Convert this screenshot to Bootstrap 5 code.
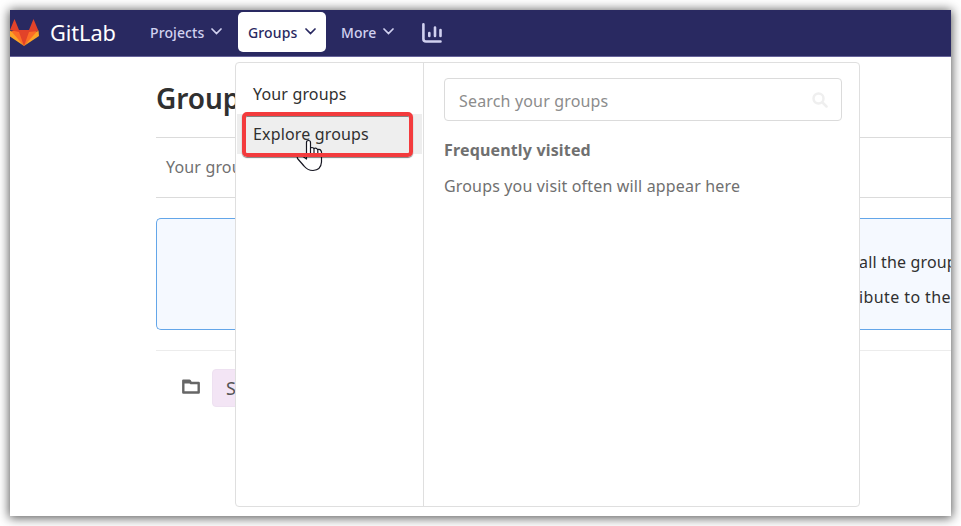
<!DOCTYPE html>
<html lang="en">
<head>
<meta charset="utf-8">
<meta name="viewport" content="width=device-width, initial-scale=1">
<title>Groups · GitLab</title>
<link href="https://cdn.jsdelivr.net/npm/bootstrap@5.3.0/dist/css/bootstrap.min.css" rel="stylesheet">
<style>
body{font-family:"Noto Sans","Open Sans",sans-serif;font-size:16px;line-height:24px;letter-spacing:.16px;color:#303030;padding:10px;height:526px;overflow:hidden;background:#fff}
.window{height:506px;background:#fff;box-shadow:0 1px 10px 1px rgba(0,0,0,.65)}
.topbar{height:47px;background:#292961;border-bottom:1px solid #66639a;color:#d1d1f0}
.logo{width:29px;height:29px;margin-top:-2px}
.brand{font-size:21.800px;color:#fff;margin-left:11px;width:100px;letter-spacing:-.1px;margin-top:-1px}
.top-link{font-size:14px;font-weight:500;height:40px;width:88px;border-radius:5px;margin-top:-3px;color:#d1d1f0;letter-spacing:.1px}
.top-link span{padding-top:2px}
.top-link svg{margin-left:7px}
.top-link.current{background:#fff;color:#292961;padding-left:10px;letter-spacing:.15px}
.top-link.more-link{width:96px;padding-left:15px}
.content-area{padding-left:146px}
.page-title{font-size:28px;font-weight:600;line-height:36px;height:80px;padding-top:23px;letter-spacing:-.1px}
.tab-row{height:61px;border-top:1px solid #dbdbdb;border-bottom:1px solid #dbdbdb;color:#707070;padding:17px 10px}
.notice{height:112px;margin-top:20px;background:#f5f9ff;border:1px solid #63a6e9;border-right:0;border-radius:5px 0 0 5px;padding:26px 0 0 702px;line-height:35px}
.notice .cut{margin-left:-7px;letter-spacing:.4px}
.group-row{margin-top:20px;border-top:1px solid #ececec;padding:18px 0 0 26px}
.group-row svg{margin-top:-2px}
.avatar{width:38px;height:38px;border-radius:4px;background:#f3e5f5;border:1px solid #eee1f1;font-size:18px;color:#555;margin-left:12px}
.groups-menu{left:225px;top:52px;width:625px;height:445px;background:#fff;border:1px solid #dfdfdf;border-radius:4px;z-index:5}
.menu-side{width:188px;border-right:1px solid #dfdfdf;padding:11px 1px}
.menu-item{height:40px;padding:0 16px;color:#303030}
.menu-item.hovered{background:#eee}
.menu-main{padding:15px 17px 0 20px;color:#707070}
.search-box{height:43px;border:1px solid #dbdbdb;border-radius:4px;padding:2px 13px 0 14px;color:#8c8c8c}
.search-box svg{margin-top:-2px}
.frequent{margin-top:17px}
.empty-note{margin-top:12px}
.marker{left:232px;top:102px;width:171px;height:45px;border:4px solid #f33b3d;border-radius:5px;box-shadow:0 1px 1px rgba(0,0,0,.5), inset 0 1px 0 rgba(0,0,0,.45);z-index:7}
.pointer{left:286px;top:129px;z-index:6}
</style>
</head>
<body>
<div class="window position-relative">
  <div class="overflow-hidden h-100">
    <nav class="topbar d-flex align-items-center">
      <svg class="logo flex-shrink-0" viewBox="0 0 29 29"><path fill="#fc6d26" d="M0 14 14 28 28.500 14.500 24 12H5z"/><path fill="#e24329" d="M0 12 4.500 1 9 12H19L23.500 1 28.500 13 19 14 14 28 9 14z"/><path fill="#fca326" d="M0 12.500v6L14 28 2 14zM28.500 12.500 29 18 14 28 26.500 14z"/></svg>
      <div class="brand flex-shrink-0">GitLab</div>
      <a class="top-link d-flex align-items-center text-decoration-none"><span>Projects</span><svg width="11" height="7" viewBox="0 0 11 7" fill="none" stroke="currentColor" stroke-width="1.700" stroke-linecap="round"><path d="m1 1 4.500 4.500L10 1"/></svg></a>
      <a class="top-link current d-flex align-items-center text-decoration-none"><span>Groups</span><svg width="11" height="7" viewBox="0 0 11 7" fill="none" stroke="currentColor" stroke-width="1.700" stroke-linecap="round"><path d="m1 1 4.500 4.500L10 1"/></svg></a>
      <a class="top-link more-link d-flex align-items-center text-decoration-none"><span>More</span><svg width="11" height="7" viewBox="0 0 11 7" fill="none" stroke="currentColor" stroke-width="1.700" stroke-linecap="round"><path d="m1 1 4.500 4.500L10 1"/></svg></a>
      <svg width="20" height="20" viewBox="0 0 20 20" fill="none" stroke="#d1d1f0" stroke-width="2.600" stroke-linecap="round"><path d="M1.400 1.400V16Q1.400 18.500 4 18.500H18.500M7.300 10v3M13 4.500V13M18.500 7v6"/></svg>
    </nav>
    <main class="content-area">
      <h1 class="page-title mb-0">Groups</h1>
      <div class="tab-row">Your groups</div>
      <div class="notice text-nowrap overflow-hidden"><div>all the groups</div><div class="cut">ribute to the</div></div>
      <div class="group-row d-flex align-items-center">
        <svg width="18" height="16" viewBox="0 0 18 16" fill="none" stroke="#666" stroke-width="2.400" stroke-linejoin="round"><path d="M1.300 4V13.500H16.700V4H9L7.500 1.600H1.300z"/><path fill="#666" stroke="none" d="M1 1h7l2 3.500H1z"/></svg>
        <div class="avatar d-flex align-items-center justify-content-center">S</div>
      </div>
    </main>
  </div>
  <div class="groups-menu position-absolute d-flex">
    <div class="menu-side flex-shrink-0">
      <div class="menu-item d-flex align-items-center">Your groups</div>
      <div class="menu-item hovered d-flex align-items-center">Explore groups</div>
    </div>
    <div class="menu-main flex-grow-1">
      <div class="search-box d-flex align-items-center justify-content-between"><span>Search your groups</span>
        <svg width="16" height="16" viewBox="0 0 16 16" fill="none" stroke="#efefef" stroke-width="2.500" stroke-linecap="round"><circle cx="6.500" cy="6.500" r="5"/><path d="m10.500 10.500 4 4"/></svg></div>
      <div class="frequent fw-bold">Frequently visited</div>
      <div class="empty-note">Groups you visit often will appear here</div>
    </div>
  </div>
  <svg class="pointer position-absolute" width="28" height="34" viewBox="0 0 28 34" fill="#fff" stroke="#151520" stroke-width="1.200" stroke-linejoin="round"><path d="M10.500 19V3.500Q10.500 1.500 12.500 1.500T14.500 3.500V9Q16 7.800 18 9.500 20.500 8.500 21.500 10.500 24.500 9.500 25.500 13V23Q25 31 17 31.500 11.500 31.500 8 27L1.500 19.500Q.5 17 3.500 16.500 6 16.500 10.500 20z"/><path fill="none" d="M14.500 9v6M18 9.500V15.500M21.800 10.500V16"/></svg>
  <div class="marker position-absolute"></div>
</div>
<script src="https://cdn.jsdelivr.net/npm/bootstrap@5.3.0/dist/js/bootstrap.bundle.min.js"></script>
</body>
</html>
